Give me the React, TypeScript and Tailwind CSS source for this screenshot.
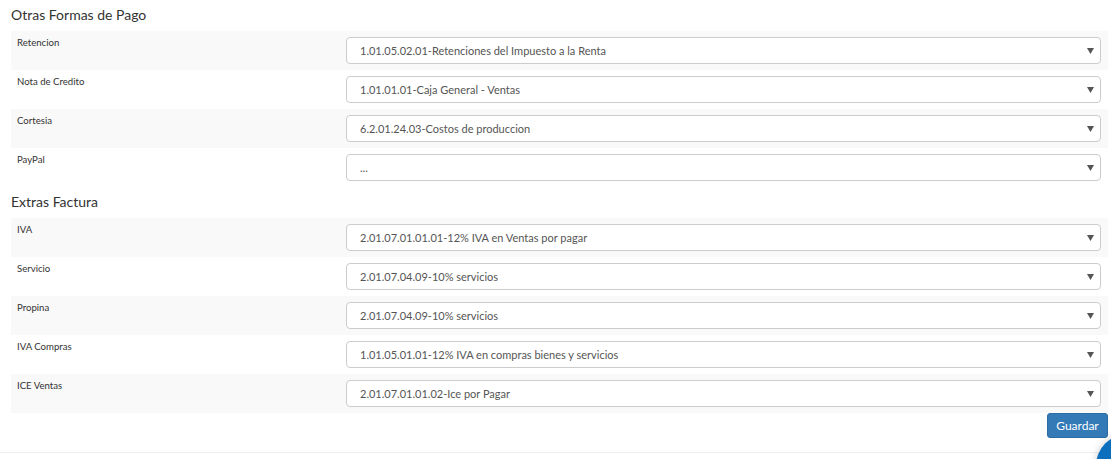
const otras = [
  { label: "Retencion", value: "1.01.05.02.01-Retenciones del Impuesto a la Renta" },
  { label: "Nota de Credito", value: "1.01.01.01-Caja General - Ventas" },
  { label: "Cortesia", value: "6.2.01.24.03-Costos de produccion" },
  { label: "PayPal", value: "..." },
];

const extras = [
  { label: "IVA", value: "2.01.07.01.01.01-12% IVA en Ventas por pagar" },
  { label: "Servicio", value: "2.01.07.04.09-10% servicios" },
  { label: "Propina", value: "2.01.07.04.09-10% servicios" },
  { label: "IVA Compras", value: "1.01.05.01.01-12% IVA en compras bienes y servicios" },
  { label: "ICE Ventas", value: "2.01.07.01.01.02-Ice por Pagar" },
];

function SelectBox({ value }: { value: string }) {
  return (
    <div className="flex h-[27px] items-center justify-between rounded-[4px] border border-[#cccccc] bg-white pl-[13px] pr-[6px] text-[11px] text-[#555555]">
      <span className="leading-[14px]">{value}</span>
      <svg width="7" height="6" viewBox="0 0 7 6" className="mt-[1px]">
        <path d="M0 0 L7 0 L3.5 6 Z" fill="#555555" />
      </svg>
    </div>
  );
}

function Section({ title, rows }: { title: string; rows: { label: string; value: string }[] }) {
  return (
    <div>
      {/* Section title */}
      <h4 className="h-[31px] pt-[6px] text-[14px] leading-[18px] text-[#333333]">{title}</h4>
      {rows.map((r, i) => (
        <div
          key={r.label}
          className={`grid h-[39px] grid-cols-[329px_1fr] ${i % 2 === 0 ? "bg-[#f9f9f9]" : "bg-white"}`}
        >
          <div className="pl-[6px] pt-[6px] text-[9.6px] leading-[12px] text-[#333333]">{r.label}</div>
          <div className="py-[6px] pl-[6px] pr-[7px]">
            <SelectBox value={r.value} />
          </div>
        </div>
      ))}
    </div>
  );
}

export default function App() {
  return (
    <div className="relative h-[459px] w-full overflow-hidden bg-white font-['Lato',sans-serif]">
      <div className="pl-[11px] pr-[3px]">
        <Section title="Otras Formas de Pago" rows={otras} />
        <Section title="Extras Factura" rows={extras} />

        {/* Save button */}
        <div className="flex justify-end">
          <button className="h-[25px] w-[61px] rounded-[3px] border border-[#2e6da4] bg-[#337ab7] text-[12px] text-white">
            Guardar
          </button>
        </div>
      </div>

      <div className="mt-[14px] border-t border-[#eeeeee]" />

      {/* Floating action button */}
      <div className="absolute left-[1096px] top-[434px] h-[64px] w-[64px] rounded-full bg-[#0b6fbd] shadow-[0_0_8px_rgba(0,0,0,0.2)]" />
    </div>
  );
}
